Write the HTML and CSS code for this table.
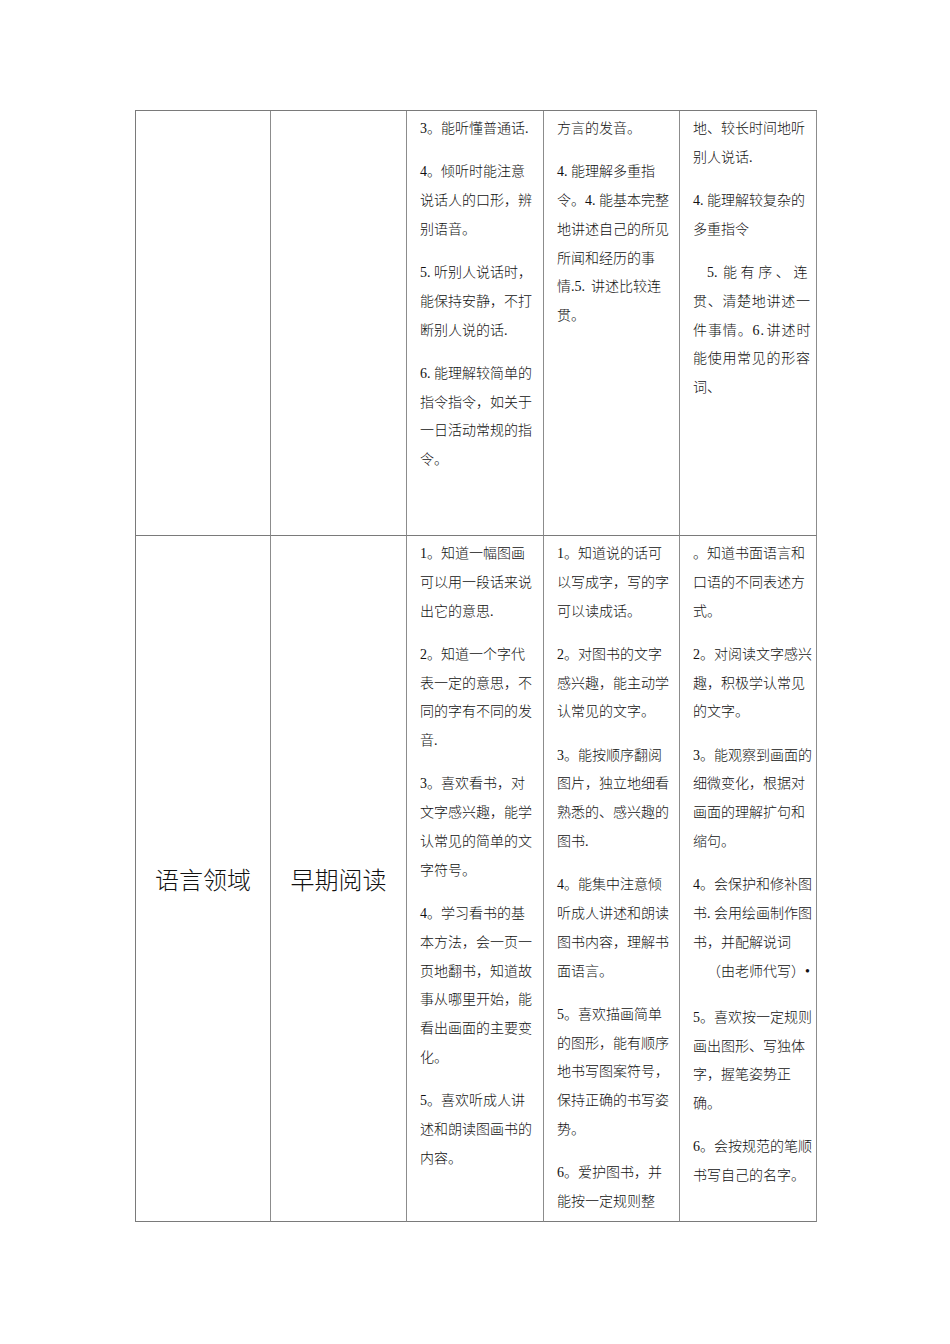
FILE: index.html
```html
<!DOCTYPE html>
<html lang="zh-CN">
<head>
<meta charset="utf-8">
<link rel="stylesheet" href="styles.css">
</head>
<body>
<div class="page">
  <div class="grid">
    <div class="cell"></div>
    <div class="cell"></div>
    <div class="cell txt">
      <p>3。能听懂普通话.</p>
      <p>4。倾听时能注意<br>说话人的口形，辨<br>别语音。</p>
      <p><span class="n">5.</span>听别人说话时，<br>能保持安静，不打<br>断别人说的话.</p>
      <p><span class="n">6.</span>能理解较简单的<br>指令指令，如关于<br>一日活动常规的指<br>令。</p>
    </div>
    <div class="cell txt">
      <p>方言的发音。</p>
      <p><span class="n">4.</span>能理解多重指<br>令。<span class="n">4.</span>能基本完整<br>地讲述自己的所见<br>所闻和经历的事<br>情<span class="n3">.5.</span>讲述比较连<br>贯。</p>
    </div>
    <div class="cell txt">
      <p>地、较长时间地听<br>别人说话.</p>
      <p><span class="n">4.</span>能理解较复杂的<br>多重指令</p>
      <p><span class="ind"><span class="n w2">5.</span><span class="sp4">能有序、连</span></span><br><span class="sp07">贯、清楚地讲述一</span><br><span class="sp1">件事情。<span class="n">6.</span>讲述时</span><br><span class="sp07">能使用常见的形容</span><br>词、</p>
    </div>

    <div class="cell big">语言领域</div>
    <div class="cell big">早期阅读</div>
    <div class="cell txt">
      <p>1。知道一幅图画<br>可以用一段话来说<br>出它的意思.</p>
      <p>2。知道一个字代<br>表一定的意思，不<br>同的字有不同的发<br>音.</p>
      <p>3。喜欢看书，对<br>文字感兴趣，能学<br>认常见的简单的文<br>字符号。</p>
      <p>4。学习看书的基<br>本方法，会一页一<br>页地翻书，知道故<br>事从哪里开始，能<br>看出画面的主要变<br>化。</p>
      <p>5。喜欢听成人讲<br>述和朗读图画书的<br>内容。</p>
    </div>
    <div class="cell txt">
      <p>1。知道说的话可<br>以写成字，写的字<br>可以读成话。</p>
      <p>2。对图书的文字<br>感兴趣，能主动学<br>认常见的文字。</p>
      <p>3。能按顺序翻阅<br>图片，独立地细看<br>熟悉的、感兴趣的<br>图书.</p>
      <p>4。能集中注意倾<br>听成人讲述和朗读<br>图书内容，理解书<br>面语言。</p>
      <p>5。喜欢描画简单<br>的图形，能有顺序<br>地书写图案符号，<br>保持正确的书写姿<br>势。</p>
      <p>6。爱护图书，并<br>能按一定规则整</p>
    </div>
    <div class="cell txt">
      <p>。知道书面语言和<br>口语的不同表述方<br>式。</p>
      <p>2。对阅读文字感兴<br>趣，积极学认常见<br>的文字。</p>
      <p>3。能观察到画面的<br>细微变化，根据对<br>画面的理解扩句和<br>缩句。</p>
      <p class="more">4。会保护和修补图<br>书<span class="n1">.</span>会用绘画制作图<br>书，并配解说词<br><span class="ind">（由老师代写）•</span></p>
      <p>5。喜欢按一定规则<br>画出图形、写独体<br>字，握笔姿势正<br>确。</p>
      <p>6。会按规范的笔顺<br>书写自己的名字。</p>
    </div>
  </div>
</div>
</body>
</html>
```

FILE: styles.css
```css
html, body {
  margin: 0;
  padding: 0;
  background: #ffffff;
}

.page {
  padding: 110px 0 0 135px;
}

.grid {
  display: grid;
  grid-template-columns: 135px 136px 137px 136px 137px;
  grid-template-rows: 425px 686px;
  width: max-content;
  border-top: 1px solid #7a7a7a;
  border-left: 1px solid #7a7a7a;
}

.cell {
  box-sizing: border-box;
  border-right: 1px solid #8c8c8c;
  border-bottom: 1px solid #7a7a7a;
  overflow: hidden;
}

.txt {
  padding: 4px 2px 0 13px;
  font-family: "Liberation Serif", "Noto Sans CJK SC", serif;
  font-weight: 300;
  font-size: 14px;
  line-height: 28.8px;
  color: #111111;
  white-space: nowrap;
}

.txt p {
  margin: 0 0 14.4px 0;
}

.txt p.more {
  margin-bottom: 17.5px;
}

.n {
  display: inline-block;
  width: 14px;
}

.n.w2 {
  width: 16px;
}

.n3 {
  display: inline-block;
  width: 20px;
}

.n1 {
  display: inline-block;
  width: 7px;
}

.ind {
  padding-left: 14px;
}

.sp4 {
  letter-spacing: 3.6px;
}

.sp07 {
  letter-spacing: 0.7px;
}

.sp1 {
  letter-spacing: 0.9px;
}

.big {
  display: flex;
  align-items: center;
  justify-content: center;
  font-family: "Noto Sans CJK SC", sans-serif;
  font-weight: 300;
  font-size: 24px;
  color: #111111;
}
```
